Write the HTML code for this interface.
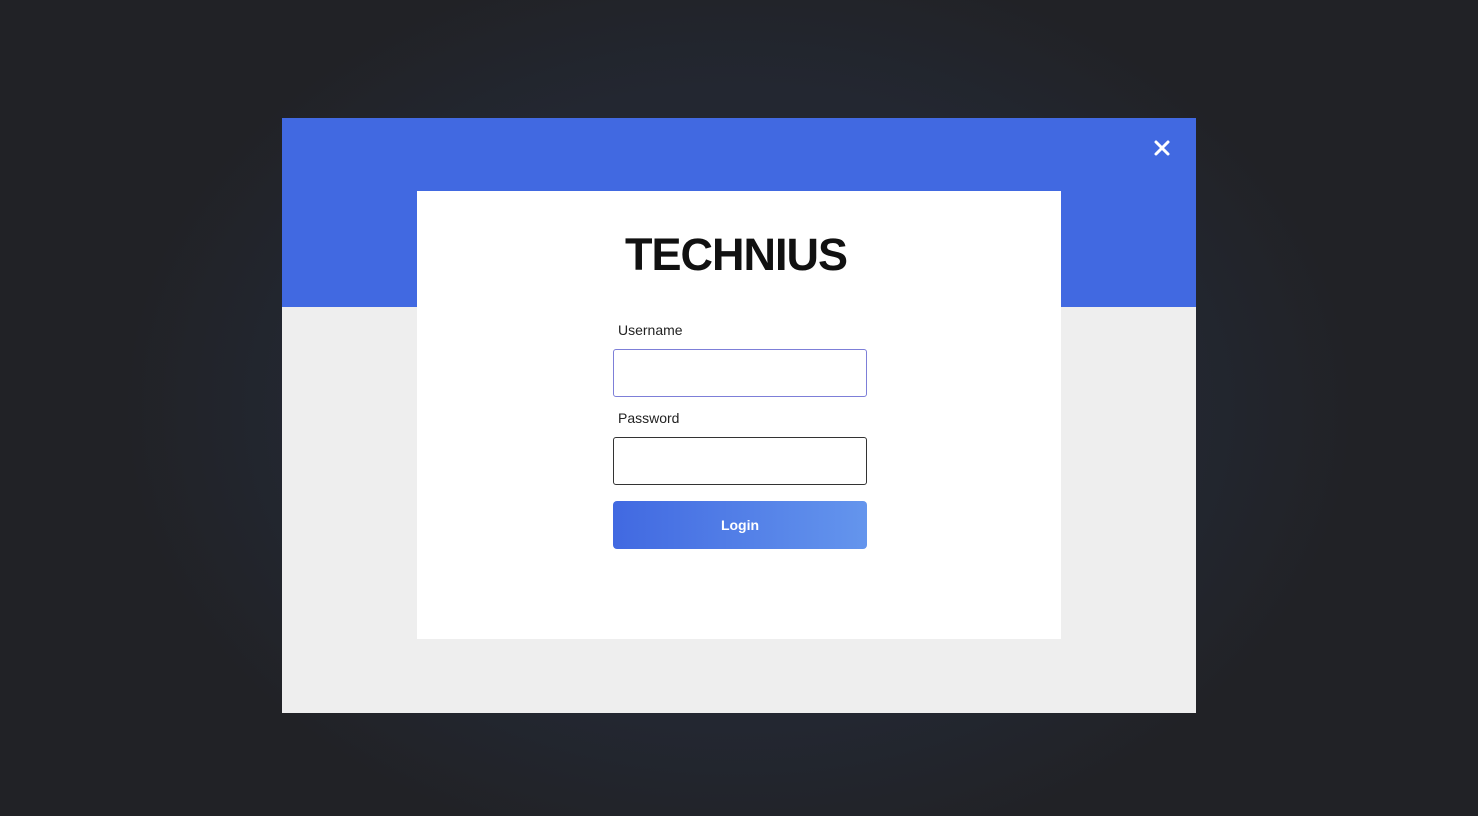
<!DOCTYPE html>
<html><head><style>
html,body{margin:0;padding:0;}
body{width:1478px;height:816px;overflow:hidden;position:relative;font-family:"Liberation Sans",sans-serif;
background:radial-gradient(ellipse 620px 460px at 739px 408px,#242833 0%,#232731 70%,#212226 100%);}
.modal{position:absolute;left:282px;top:118px;width:914px;height:595px;background:#eeeeee;}
.hdr{position:absolute;left:0;top:0;width:914px;height:189px;background:#4169e1;}
.x{position:absolute;left:871px;top:21px;width:18px;height:18px;}
.card{position:absolute;left:135px;top:73px;width:644px;height:448px;background:#fff;}
h1{position:absolute;left:0;width:638px;top:38px;margin:0;text-align:center;font-size:45px;font-weight:bold;letter-spacing:-1px;color:#111;}
.lbl{position:absolute;left:201px;font-size:14px;color:#222;}
.inp{position:absolute;left:196px;width:254px;height:48px;box-sizing:border-box;border-radius:3px;background:#fff;}
.btn{position:absolute;left:196px;top:310px;width:254px;height:48px;border-radius:4px;background:linear-gradient(90deg,#4169e1,#6495ed);color:#fff;font-weight:bold;font-size:14px;text-align:center;line-height:48px;}
</style></head><body>
<div class="modal">
<div class="hdr"></div>
<svg class="x" viewBox="0 0 18 18"><path d="M3 3L15 15M15 3L3 15" stroke="#fff" stroke-width="3" stroke-linecap="round"/></svg>
<div class="card">
<h1>TECHNIUS</h1>
<div class="lbl" style="top:131px">Username</div>
<div class="inp" style="top:158px;border:1px solid #7d7fd8;"></div>
<div class="lbl" style="top:219px">Password</div>
<div class="inp" style="top:246px;border:1px solid #333;"></div>
<div class="btn">Login</div>
</div>
</div>
</body></html>
